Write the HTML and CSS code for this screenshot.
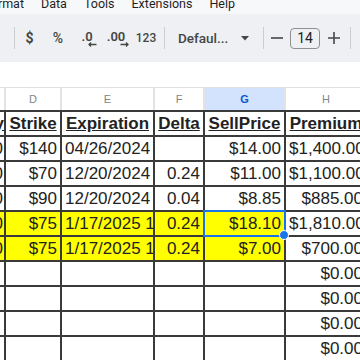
FILE: index.html
```html
<!DOCTYPE html>
<html lang="en">
<head>
  <meta charset="UTF-8">
  <title>Sheet</title>
  <link rel="stylesheet" href="styles.css">
</head>
<body>
  <div class="top">
    <div class="menubar">
      <div class="menu">
        <span>Format</span>
        <span>Data</span>
        <span>Tools</span>
        <span>Extensions</span>
        <span>Help</span>
      </div>
    </div>

    <div class="toolbar">
      <div class="sep sep-first"></div>
      <div class="tool tool-dollar">$</div>
      <div class="tool tool-pct">%</div>
      <div class="tool tool-dec">
        <span class="dec">.0<svg class="arr" width="9" height="5" viewBox="0 0 9 5"><path d="M8.5 2.5H1M3 0.5L1 2.5L3 4.5" fill="none" stroke="#444746" stroke-width="1.3"/></svg></span>
      </div>
      <div class="tool tool-inc">
        <span class="dec">.00<svg class="arr" width="9" height="5" viewBox="0 0 9 5"><path d="M0.5 2.5H8M6 0.5L8 2.5L6 4.5" fill="none" stroke="#444746" stroke-width="1.3"/></svg></span>
      </div>
      <div class="tool tool-123">123</div>
      <div class="sep sep-num"></div>
      <div class="font-pick">
        <span class="font-name">Defaul...</span>
        <svg width="8" height="5" viewBox="0 0 8 5"><path d="M0 0H8L4 4.5Z" fill="#444746"/></svg>
      </div>
      <div class="sep sep-font"></div>
      <div class="size-btn size-minus">
        <svg width="12" height="12" viewBox="0 0 12 12"><path d="M0 6H12" stroke="#444746" stroke-width="1.6"/></svg>
      </div>
      <div class="size-box">14</div>
      <div class="size-btn size-plus">
        <svg width="12" height="12" viewBox="0 0 12 12"><path d="M0 6H12M6 0V12" stroke="#444746" stroke-width="1.6"/></svg>
      </div>
      <div class="sep sep-last"></div>
    </div>
  </div>

  <div class="formula"></div>

  <div class="sheet">
    <div class="letters">
      <div class="letter"></div>
      <div class="letter">D</div>
      <div class="letter">E</div>
      <div class="letter">F</div>
      <div class="letter letter-sel">G</div>
      <div class="letter">H</div>
    </div>

    <div class="grid">
      <div class="cell head num-c">Qty</div>
      <div class="cell head">Strike</div>
      <div class="cell head">Expiration</div>
      <div class="cell head">Delta</div>
      <div class="cell head">SellPrice</div>
      <div class="cell head">Premium</div>

      <div class="cell num-c">10</div>
      <div class="cell num">$140</div>
      <div class="cell">04/26/2024</div>
      <div class="cell num"></div>
      <div class="cell num">$14.00</div>
      <div class="cell num">$1,400.00</div>

      <div class="cell num-c">10</div>
      <div class="cell num">$70</div>
      <div class="cell">12/20/2024</div>
      <div class="cell num">0.24</div>
      <div class="cell num">$11.00</div>
      <div class="cell num">$1,100.00</div>

      <div class="cell num-c">10</div>
      <div class="cell num">$90</div>
      <div class="cell">12/20/2024</div>
      <div class="cell num">0.04</div>
      <div class="cell num">$8.85</div>
      <div class="cell num">$885.00</div>

      <div class="cell hl num-c">10</div>
      <div class="cell hl num">$75</div>
      <div class="cell hl">1/17/2025 16:00</div>
      <div class="cell hl num">0.24</div>
      <div class="cell hl num selected">$18.10</div>
      <div class="cell num">$1,810.00</div>

      <div class="cell hl num-c">10</div>
      <div class="cell hl num">$75</div>
      <div class="cell hl">1/17/2025 16:00</div>
      <div class="cell hl num">0.24</div>
      <div class="cell hl num">$7.00</div>
      <div class="cell num">$700.00</div>

      <div class="cell"></div>
      <div class="cell"></div>
      <div class="cell"></div>
      <div class="cell"></div>
      <div class="cell"></div>
      <div class="cell num">$0.00</div>

      <div class="cell"></div>
      <div class="cell"></div>
      <div class="cell"></div>
      <div class="cell"></div>
      <div class="cell"></div>
      <div class="cell num">$0.00</div>

      <div class="cell"></div>
      <div class="cell"></div>
      <div class="cell"></div>
      <div class="cell"></div>
      <div class="cell"></div>
      <div class="cell num">$0.00</div>

      <div class="cell"></div>
      <div class="cell"></div>
      <div class="cell"></div>
      <div class="cell"></div>
      <div class="cell"></div>
      <div class="cell num">$0.00</div>
    </div>
  </div>
</body>
</html>
```

FILE: styles.css
```css
* {
  margin: 0;
  padding: 0;
  box-sizing: border-box;
}

html,
body {
  width: 360px;
  height: 360px;
  overflow: hidden;
}

body {
  background: white;
  font-family: Roboto, "Liberation Sans", sans-serif;
  color: #1f1f1f;
}

/* top chrome */

.top {
  background: #f7f8fa;
}

.menubar {
  height: 14px;
  overflow: hidden;
}

.menu {
  display: flex;
  gap: 17px;
  margin-top: -5px;
  margin-left: -16px;
  font-size: 12.5px;
  line-height: 18px;
  white-space: nowrap;
}

.toolbar {
  display: flex;
  align-items: center;
  height: 48px;
  background: #eef0f3;
  color: #444746;
  overflow: hidden;
}

.toolbar > * {
  flex: none;
}

.sep {
  width: 1px;
  height: 22px;
  background: #c9ccd0;
}

.sep-first {
  margin-left: 14px;
}

.sep-num {
  margin-left: 2px;
}

.sep-font {
  margin-left: 14px;
}

.sep-last {
  margin-left: 3px;
}

.tool {
  display: flex;
  align-items: center;
  justify-content: center;
  height: 28px;
  font-size: 14px;
  font-weight: 500;
}

.tool-dollar {
  width: 29px;
  font-weight: 700;
}

.tool-pct {
  width: 28px;
}

.tool-dec {
  width: 30px;
}

.tool-inc {
  width: 28px;
}

.tool-123 {
  width: 32px;
  font-size: 12px;
}

.dec {
  display: inline-flex;
  flex-direction: column;
  align-items: flex-end;
  font-size: 13px;
  line-height: 12px;
  font-weight: 600;
  margin-top: 2px;
}

.arr {
  display: block;
  margin-top: -1px;
  margin-right: -4px;
}

.font-pick {
  display: flex;
  align-items: center;
  justify-content: space-between;
  margin-left: 13px;
  width: 71px;
}

.font-name {
  font-size: 13.5px;
  font-weight: 500;
}

.size-btn {
  display: flex;
  align-items: center;
  justify-content: center;
}

.size-minus {
  width: 26px;
}

.size-box {
  width: 30px;
  height: 21px;
  border: 1px solid #8e918f;
  border-radius: 4px;
  font-size: 14px;
  line-height: 19px;
  text-align: center;
  color: #1f1f1f;
}

.size-plus {
  width: 27px;
}

.formula {
  height: 25px;
  background: white;
}

/* sheet */

.sheet {
  overflow: hidden;
  font-family: "Liberation Sans", Arial, sans-serif;
}

.letters,
.grid {
  display: grid;
  grid-template-columns: 34px 54px 91px 48px 79px 80px;
  column-gap: 2px;
  margin-left: -30px;
  width: 396px;
}

.letters {
  border-top: 1px solid #dfe1e4;
  background: #e1e3e6;
}

.letter {
  height: 22px;
  background: white;
  font-size: 11px;
  line-height: 22px;
  text-align: center;
  color: #80868b;
}

.letter-sel {
  background: #d3e3fd;
  color: #0b57d0;
  font-weight: 700;
}

.grid {
  row-gap: 2px;
  padding-top: 2px;
  background: #3a3a3a;
}

.cell {
  position: relative;
  height: 23px;
  padding: 0 3px;
  background: white;
  font-size: 17px;
  line-height: 23px;
  color: #222;
  white-space: nowrap;
  overflow: hidden;
}

.head {
  font-weight: 700;
  text-decoration: underline;
  text-align: center;
}

.num {
  text-align: right;
}

.num-c {
  text-align: right;
  padding-right: 1px;
}

.head.num-c {
  padding-right: 0;
}

.hl {
  background: #ffff00;
}

.selected {
  overflow: visible;
}

.selected::after {
  content: "";
  position: absolute;
  top: -2px;
  left: -2px;
  right: -2px;
  bottom: -2px;
  border: 2px solid #1a73e8;
}

.selected::before {
  content: "";
  position: absolute;
  right: -5px;
  bottom: -5px;
  width: 8px;
  height: 8px;
  border-radius: 50%;
  background: #1a73e8;
  border: 1px solid white;
  z-index: 1;
}
```
